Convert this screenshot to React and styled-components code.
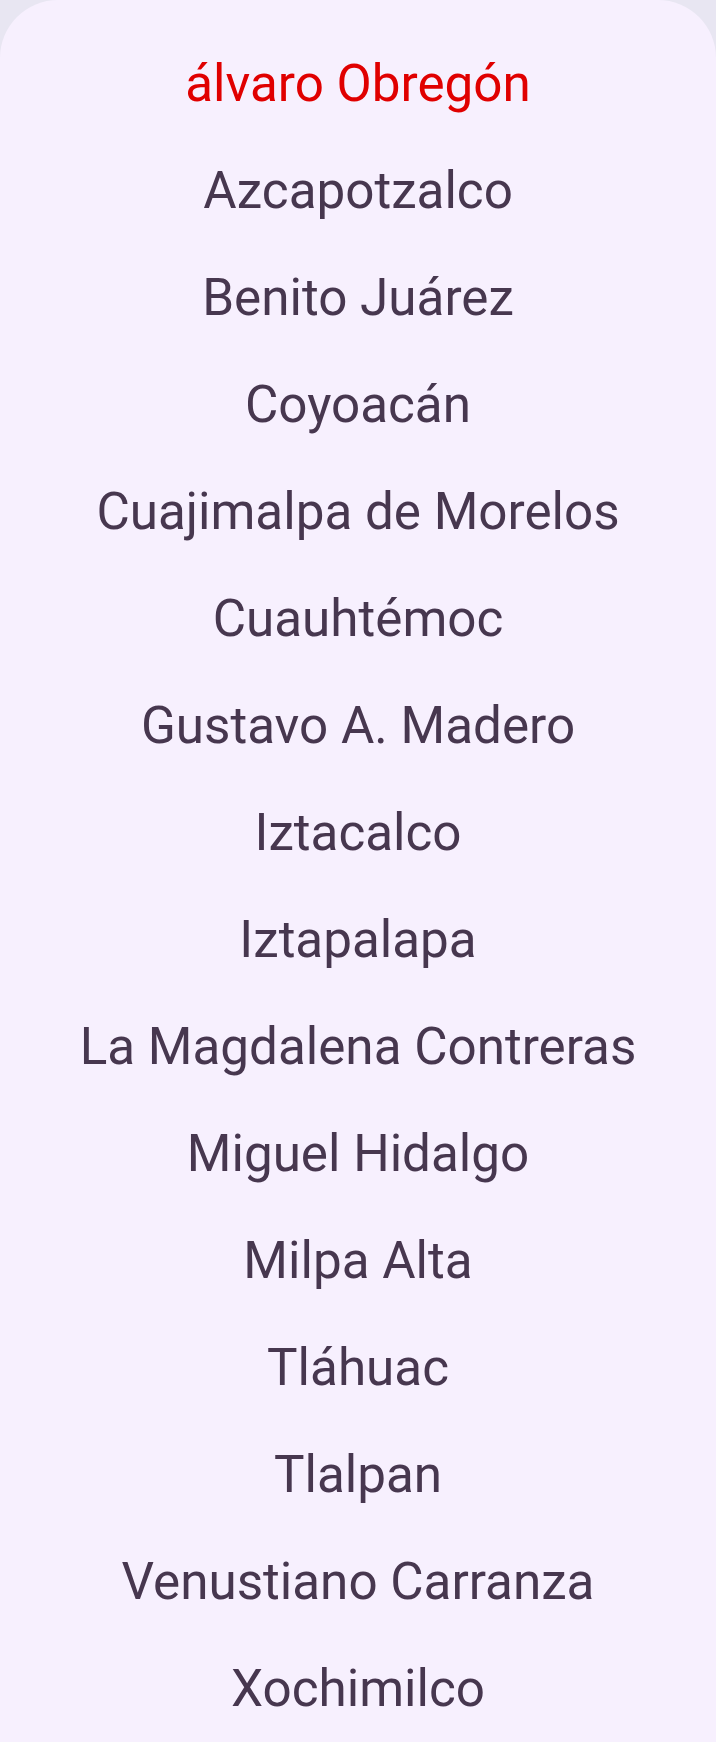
import React from "react";
import styled, { createGlobalStyle } from "styled-components";

const GlobalStyle = createGlobalStyle`
	html, body {
		margin: 0;
		padding: 0;
		background: #e8e6f2;
	}
	body {
		font-family: Roboto, "Noto Sans", sans-serif;
	}
`;

const Sheet = styled.div`
	background: #f7f0fe;
	border-radius: 58px 58px 0 0;
	min-height: 1742px;
	padding-top: 30px;
	box-sizing: border-box;
`;

const List = styled.ul`
	list-style: none;
	margin: 0;
	padding: 0;
	display: flex;
	flex-direction: column;
`;

const Item = styled.li`
	height: 107px;
	display: flex;
	align-items: center;
	justify-content: center;
	font-size: 51.2px;
	color: ${(props) => (props.$selected ? "#e00000" : "#47374f")};
`;

const alcaldias = [
	"álvaro Obregón",
	"Azcapotzalco",
	"Benito Juárez",
	"Coyoacán",
	"Cuajimalpa de Morelos",
	"Cuauhtémoc",
	"Gustavo A. Madero",
	"Iztacalco",
	"Iztapalapa",
	"La Magdalena Contreras",
	"Miguel Hidalgo",
	"Milpa Alta",
	"Tláhuac",
	"Tlalpan",
	"Venustiano Carranza",
	"Xochimilco",
];

const App = () => {
	return (
		<>
			<GlobalStyle />
			<Sheet>
				<List>
					{alcaldias.map((name, i) => (
						<Item key={name} $selected={i === 0}>
							{name}
						</Item>
					))}
				</List>
			</Sheet>
		</>
	);
};

export default App;
